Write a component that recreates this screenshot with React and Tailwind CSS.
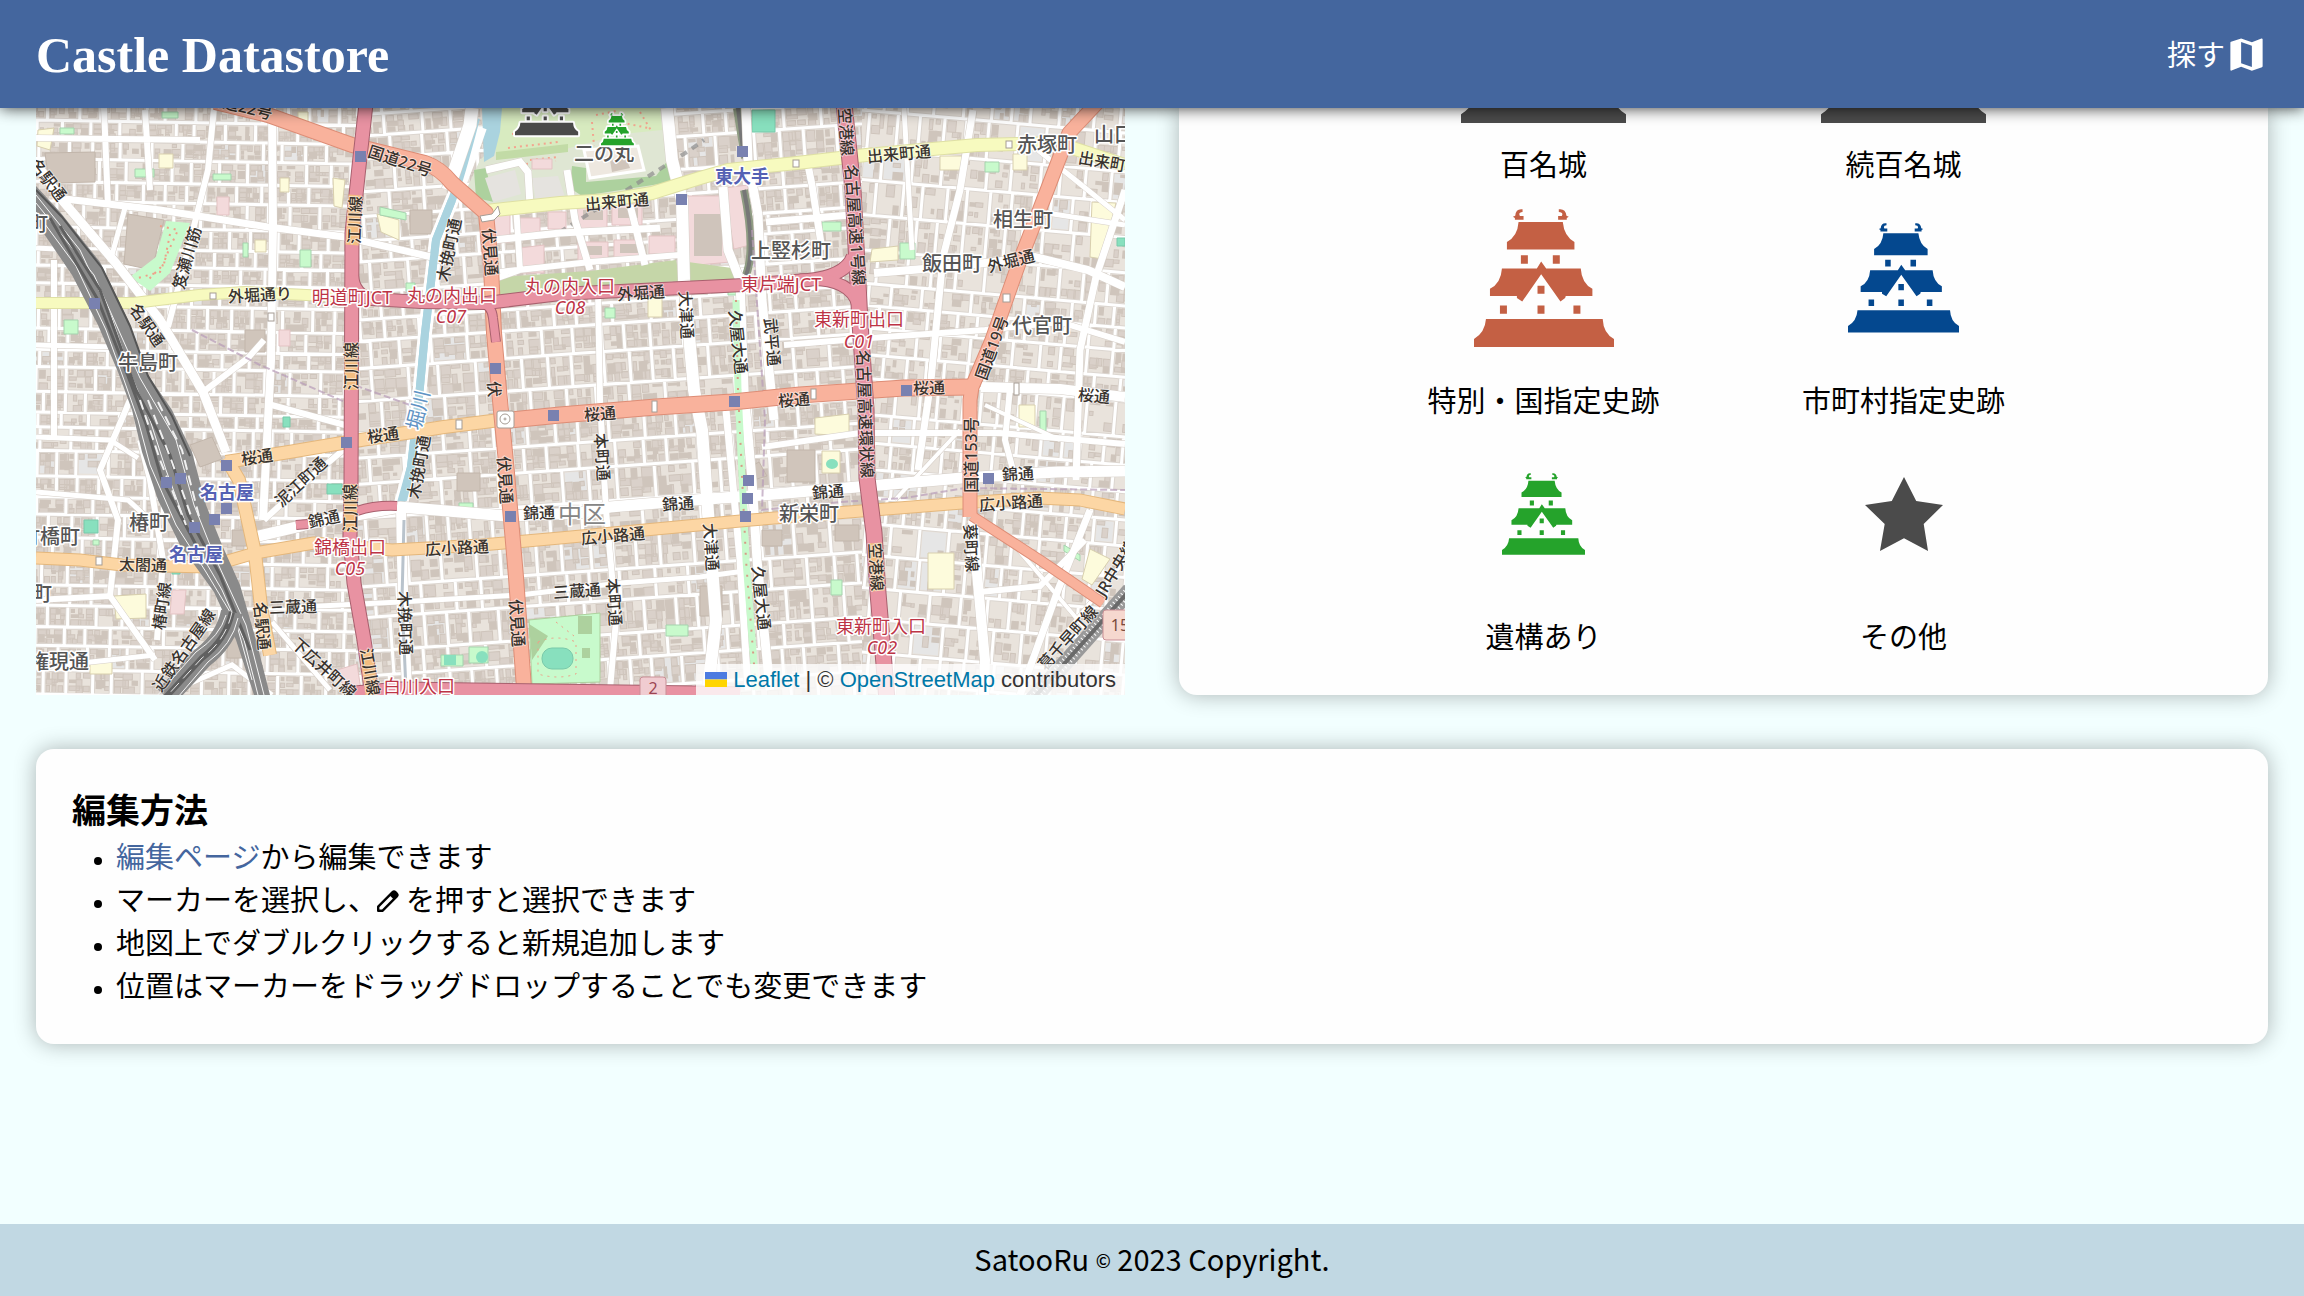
import React from 'react';
import { MdMap } from 'react-icons/md';

function CastleShape() {
  return (
    <>
      <path d="M255 657H606Q608 700 640 717V741H219V717Q252 698 255 657Z" />
      <path d="M303 505H408L421 484L436 505H540Q543 550 575 566V588H495L493 594L479 604L421 522L364 604L348 594V588H267V566Q300 550 303 505Z" />
      <path d="M353 365H486Q490 408 521 425V448H318V425Q350 408 353 365Z" />
      <path d="M360 465h21v26h-21zM456 465h21v26h-21zM410 557h21v24h-21zM297 616h21v25h-21zM410 616h21v25h-21zM518 616h21v25h-21z" />
      <path d="M365 327Q345 324 343 346L336 349L342 353V358H368V347H357Q351 336 365 335Z" />
      <path d="M474 327Q494 324 497 346L504 349L498 353V358H472V347H483Q489 336 474 335Z" />
    </>
  );
}

function Castle({ className }) {
  return (
    <svg viewBox="219 326 421 415" className={className} fill="currentColor" aria-hidden="true">
      <CastleShape />
    </svg>
  );
}

function Star() {
  return (
    <svg viewBox="0 0 198 222" className="h-[74px] w-[78px] text-[#4b4b4b]" preserveAspectRatio="none" fill="currentColor" aria-hidden="true">
      <path d="M99 0L130 72L198 84L149 141L160 222L99 184L38 222L50 141L0 84L68 72Z" />
    </svg>
  );
}

function Pencil() {
  return (
    <svg viewBox="0 0 22 22" className="mr-[7px] inline size-[22px] align-[-1px]" aria-hidden="true">
      <path d="M1.2 20.8V16.6L15.6 2.2a2 2 0 0 1 2.8 0L19.8 3.6a2 2 0 0 1 0 2.8L5.4 20.8Z" fill="none" stroke="currentColor" strokeWidth="2.4" strokeLinejoin="round" />
      <path d="M12.6 5.2L15.6 2.2a2 2 0 0 1 2.8 0L19.8 3.6a2 2 0 0 1 0 2.8L16.8 9.4Z" fill="currentColor" />
    </svg>
  );
}

/* ---------- map drawing ---------- */

function makeRandom(seed) {
  let s = seed;
  return () => {
    s = (s * 16807) % 2147483647;
    return s / 2147483647;
  };
}

function district(seed, x0, x1, angle, cellW, cellH, density) {
  const rnd = makeRandom(seed);
  let houses = '';
  let dark = '';
  let lots = '';
  let streets = '';
  const a = x0 - 80;
  const b = x1 + 80;
  for (let y = 20; y < 780; ) {
    const h = cellH * (0.7 + rnd() * 0.6);
    streets += `M${a} ${y.toFixed(1)}H${b}`;
    for (let x = a + rnd() * 8; x < b; ) {
      const w = cellW * (0.7 + rnd() * 0.6);
      streets += `M${x.toFixed(1)} ${y.toFixed(1)}v${h.toFixed(1)}`;
      for (let i = 0; i < 9; i++) {
        if (rnd() > density) continue;
        const bw = 3 + rnd() * w * 0.28;
        const bh = 3 + rnd() * h * 0.28;
        const bx = x + 3 + (i % 3) * ((w - 5) / 3);
        const by = y + 3 + Math.floor(i / 3) * ((h - 5) / 3);
        const r = `M${bx.toFixed(1)} ${by.toFixed(1)}h${bw.toFixed(1)}v${bh.toFixed(1)}h${(-bw).toFixed(1)}z`;
        if (rnd() > 0.7) dark += r;
        else houses += r;
      }
      if (rnd() > 0.9) lots += `M${(x + 3).toFixed(1)} ${(y + 3).toFixed(1)}h${(w - 6).toFixed(1)}v${(h - 6).toFixed(1)}h${(6 - w).toFixed(1)}z`;
      x += w;
    }
    y += h;
  }
  return { houses, dark, lots, streets, transform: `rotate(${angle} ${(x0 + x1) / 2} 400)` };
}

const districts = [
  { id: 'west', x0: 36, x1: 356, ...district(11, 36, 356, 1, 25, 20, 0.78) },
  { id: 'mid', x0: 356, x1: 862, ...district(77, 356, 862, -4, 30, 29, 0.92) },
  { id: 'east', x0: 862, x1: 1125, ...district(5, 862, 1125, 5, 24, 30, 0.5) },
];

const greens = [
  'M60 128h14v6h-14z M162 112h16v6h-16z M135 169h19v8h-19z M213 174h18v6h-18z M300 250h11v17h-11z M64 320h14v14h-14z M380 207l26 6v7l-26-5z M406 283h9v8h-9z M243 243h5v14h-5z',
  'M822 222h19v9h-19z M985 162h14v10h-14z M900 243h15v16h-15z M728 275h12v20h-12z M605 308h10v10h-10z M831 580h11v15h-11z M666 625h22v11h-22z M1040 411h6v20h-6z M1064 545l16 10v6l-16-10z M441 655h22v11h-22z M469 647h19v16h-19z M93 540h6v5h-6z M459 503h14v8h-14z',
];
const teals = 'M84 520h14v13h-14z M327 484h15v10h-15z M283 417h7v10h-7z M752 110h23v22h-23z M1117 238h8v8h-8z M172 570h8v4h-8z';
const sands = 'M38 130l16-2l-4 22l-13-4z M159 154h14v14h-14z M333 178l12 2l-3 28l-8-2z M377 214l22 6v20l-18-8z M114 596l32 -2v24l-30 1z M90 662h22v12h-22z M940 156h22v14h-22z M1013 154h14v16h-14z M872 249l26-3v14l-28 2z M1092 202l24 1l-14 56l-12-2z M815 418l34-4v22l-34-2z M822 451h18v22h-18z M928 553h26v36h-26z M1019 405h16v22h-16z M1090 549l20 10l-18 26l-10-6z M280 178h9v14h-9z M298 112h10v12h-10z M648 295h14v22h-14z M255 240h11v12h-11z';
const grays = 'M45 153l50 -1v30l-46 1z M128 214l36 6l-12 50l-28-6z M245 330h20v22h-20z M787 450h28v32h-28z M745 470l14-8l8 14l-20 6z M835 525h24v16h-24z M762 530h20v16h-20z M457 473h23v18h-23z M692 215h34v44h-34z M190 445l22-8l10 22l-22 8z M700 586h22v30h-22z M232 530h20v16h-20z M227 630h17v28h-17z M410 210h22v24h-22z M1064 665h20v14h-20z';
const pinks = [
  'M486 212l24-2v32l-22 2z', 'M516 218h24v20l-24 3z', 'M548 212h18v17h-18z', 'M575 205h32v24h-30z', 'M612 203h30v22h-30z', 'M686 196h38l6 66l-42 4z', 'M724 188l24-3l2 60l-16 4z', 'M578 242h30v20h-30z', 'M614 240h28v18h-28z', 'M649 236h26v18h-26z', 'M520 248l24-3v28h-24z', 'M217 197h12v18h-12z', 'M172 590h14l-2 24h-14z', 'M279 330h11v16h-11z', 'M337 670l20-6l4 26h-16z', 'M532 159h20v10h-20z',
];

const whiteRoads = [
  [7, 'M65 199L160 210L268 227L345 237L432 257L445 262'],
  [8, 'M272 108L273 227L271 360L263 520'],
  [6, 'M214 108L208 170L188 250L168 327'],
  [9, 'M36 163L62 200L115 262L160 320L203 392L226 452'],
  [5, 'M125 208L110 262 M36 248L75 250 M36 345L116 347 M36 437L110 440L138 458'],
  [6, 'M104 108L108 206 M36 138L200 140 M145 110L150 190 M54 260V440'],
  [12, 'M667 108L672 160L682 200L684 280L694 390L702 430L710 540L716 620L708 690'],
  [9, 'M746 108L748 160L758 215L762 300L774 420'],
  [9, 'M723 187L728 250L740 280L744 390L752 480L757 560L770 690'],
  [7, 'M726 410L740 560L748 690'],
  [10, 'M401 507L402 560L404 620L407 690'],
  [11, 'M255 537L318 522L400 507L507 516L580 513L610 507L694 500L763 495L962 478L1057 472L1125 471'],
  [6, 'M264 520L310 478L348 446'],
  [5, 'M300 607L400 602L520 595L620 583L700 577L752 570'],
  [10, 'M981 387L1060 389L1125 397'],
  [8, 'M874 273L960 266L1035 257L1088 270L1125 287'],
  [7, 'M973 110L960 190L943 257L931 380L918 470'],
  [7, 'M1125 190L1096 277L1080 350L1076 480'],
  [6, 'M784 345L870 338L985 330L1060 322L1125 342'],
  [10, 'M973 520L977 573L985 660L984 695'],
  [6, 'M762 447L860 433L1000 433L1125 444'],
  [6, 'M1010 388L1005 440L1013 470'],
  [7, 'M1090 510L1058 590L1020 695'],
  [6, 'M980 592L1040 586L1085 540'],
  [7, 'M766 222L850 215 M808 165L812 185L822 250'],
  [7, 'M493 240L560 233L660 228 M486 170L520 162L528 172L530 205 M567 170L575 220L590 270 M630 205L645 265'],
  [6, 'M516 205L520 270L492 280 M500 272L590 262L680 255'],
  [6, 'M598 290L600 400L606 510L616 620L610 690'],
  [5, 'M272 695L232 665L175 690 M272 622L330 690'],
  [6, 'M157 640L163 560L150 480L140 440'],
  [6, 'M36 600L110 596L155 660 M110 596L118 520L100 470L130 400'],
  [5, 'M36 668L155 655 M36 492L128 500L150 520'],
  [6, 'M203 392L248 358L264 340 M268 404L345 425'],
  [5, 'M904 108L912 250 M1125 225L1040 212 M1038 150L1125 220'],
  [4, 'M960 430L895 500 M985 405L1060 440 M1010 540L1095 640 M1125 560L1060 640'],
  [13, 'M472 108L470 125L448 190'],
];

const motorways = [
  [13, 'M366 104L360 157L352 233L351 483L350 537L354 583L364 640L372 695'],
  [12, 'M352 276Q354 296 372 299L421 302L486 303L560 294L600 292L744 285L808 280Q846 276 853 256'],
  [11, 'M800 280Q850 276 858 305'],
  [8, 'M482 303Q492 306 493 318L496 342'],
  [15, 'M844 104L853 190L858 283L860 323L866 410L867 478L874 533L878 593L887 700'],
  [8, 'M357 511Q375 505 397 506'],
  [8, 'M296 525L308 524'],
  [17, 'M355 695L400 691L698 695L740 696'],
];
const salmonRoads = [
  [14, 'M215 102L268 115L352 145L425 163Q440 168 452 183L486 213L491 267L494 333L499 390L507 473L516 577L524 688'],
  [15, 'M500 421L560 415L656 407L732 402L800 395L904 388L971 387'],
  [13, 'M1098 102L1069 133L1046 193L1019 263L992 340L972 387L970 400L970 517'],
  [9, 'M972 516L1040 560L1103 603'],
];
const orangeRoads = [
  [12, 'M226 462L289 452L348 442L444 427L500 420'],
  [12, 'M226 458L239 480L255 553L261 607L270 655'],
  [11, 'M36 558L80 560L122 565L207 567L255 553L314 543L392 550L481 545L560 538L751 520L836 513L962 503L1038 498L1080 500L1125 509'],
];
const yellowRoads = [
  [10, 'M36 303H134L199 295L245 292L348 297'],
  [12, 'M486 211L560 203L610 200L652 193L700 178L728 170L797 163L866 155L977 145L1057 143L1125 165'],
];

const stations = [
  [360, 156], [94, 303], [495, 368], [742, 151], [681, 199], [734, 401], [906, 390], [553, 415], [346, 442], [226, 465],
  [166, 482], [180, 478], [226, 508], [214, 519], [194, 527], [510, 516], [748, 480], [747, 498], [745, 516], [988, 478],
];

const placeLabels = [
  ['上竪杉町', 791, 251], ['飯田町', 952, 264], ['相生町', 1023, 220], ['代官町', 1042, 326], ['赤塚町', 1047, 145],
  ['山口町', 1124, 135], ['二の丸', 604, 154], ['牛島町', 148, 363], ['椿町', 149, 523], ['竹橋町', 50, 537],
  ['町', 42, 594], ['町', 38, 224], ['権現通', 59, 662], ['新栄町', 809, 514],
];
const stationLabels = [['東大手', 742, 177], ['名古屋', 227, 493], ['名古屋', 196, 555]];
const junctionLabels = [
  ['明道町JCT', 352, 298], ['丸の内出口', 452, 296], ['丸の内入口', 570, 287], ['東片端JCT', 781, 285], ['東新町出口', 859, 320],
  ['錦橋出口', 350, 548], ['東新町入口', 881, 627], ['白川入口', 419, 687],
];
const exitCodes = [['C07', 451, 317], ['C08', 570, 308], ['C01', 859, 342], ['C05', 350, 569], ['C02', 882, 648]];
const roadLabels = [
  ['国道22号', 400, 161, 18], ['国道22号', 240, 106, 14], ['出来町通', 617, 202, -5], ['出来町通', 899, 154, -5], ['出来町通', 1110, 163, 10],
  ['外堀通り', 260, 295, -3], ['外堀通', 641, 293, -4], ['外堀通', 1011, 261, -14],
  ['桜通', 600, 414, -5], ['桜通', 794, 400, -5], ['桜通', 929, 388, -2], ['桜通', 1094, 396, 5], ['桜通', 257, 457, -8], ['桜通', 383, 435, -8],
  ['泥江町通', 301, 482, -43], ['錦通', 324, 519, -12], ['錦通', 539, 513, -2], ['錦通', 678, 504, -4], ['錦通', 828, 492, -5], ['錦通', 1018, 474, -3],
  ['広小路通', 457, 548, -3], ['広小路通', 613, 536, -5], ['広小路通', 1011, 503, -4], ['太閤通', 143, 565, 2],
  ['三蔵通', 293, 607, -2], ['三蔵通', 577, 591, -4], ['江川線', 355, 220, -88], ['江川線', 351, 366, -90], ['江川線', 350, 508, -90], ['江川線', 370, 672, 80],
  ['伏見通', 490, 252, 86], ['伏', 494, 389, 86], ['伏見通', 505, 480, 86], ['伏見通', 517, 623, 86],
  ['木挽町通', 449, 250, -78], ['木挽町通', 419, 467, -80], ['木挽町通', 405, 623, 88],
  ['大津通', 686, 315, 87], ['大津通', 711, 547, 86], ['久屋大通', 738, 342, 84], ['久屋大通', 761, 598, 84], ['武平通', 772, 342, 85],
  ['本町通', 602, 457, 86], ['本町通', 614, 602, 86], ['名古屋高速1号線', 855, 225, 86], ['空港線', 846, 132, 86], ['名古屋高速環状線', 865, 414, 88], ['空港線', 876, 567, 87],
  ['国道19号', 992, 348, -70], ['国道153号', 971, 455, -90], ['葵町線', 971, 548, 87], ['笈瀬川筋', 187, 258, -74],
  ['名駅通', 48, 180, 52], ['名駅通', 147, 325, 55], ['名駅通', 262, 626, 84], ['椿町線', 162, 606, -82], ['近鉄名古屋線', 184, 650, -55],
  ['下広井町線', 324, 668, 42], ['葛千早町線', 1068, 638, -48], ['JR中央線', 1116, 568, -58],
];

function Roads({ roads, fill, casing }) {
  return (
    <g fill="none" strokeLinejoin="round">
      {roads.map(([w, d]) => <path key={`c${d}`} d={d} stroke={casing} strokeWidth={w + 2} />)}
      {roads.map(([w, d]) => <path key={`f${d}`} d={d} stroke={fill} strokeWidth={w} />)}
    </g>
  );
}

function Labels({ items, size, fill, weight, italic, halo = '#ffffff', haloWidth = 3 }) {
  return (
    <g fontSize={size} fill={fill} fontWeight={weight} fontStyle={italic ? 'italic' : 'normal'} stroke={halo} strokeWidth={haloWidth} strokeLinejoin="round" paintOrder="stroke" textAnchor="middle">
      {items.map(([text, x, y, r = 0]) => (
        <text key={`${text}${x}-${y}`} x={x} y={y} dy="0.36em" transform={`rotate(${r} ${x} ${y})`}>{text}</text>
      ))}
    </g>
  );
}

function CityMap() {
  return (
    <svg viewBox="36 108 1089 587" preserveAspectRatio="xMidYMid slice" className="block h-full w-full font-['Noto_Sans','Noto_Sans_CJK_JP',sans-serif]" role="img" aria-label="地図">
      <defs>
        {districts.map((d) => (
          <clipPath key={d.id} id={`clip-${d.id}`}><rect x={d.x0} y="100" width={d.x1 - d.x0} height="600" /></clipPath>
        ))}
      </defs>
      <rect x="36" y="100" width="1089" height="600" fill="#e9e3dc" />
      {districts.map((d) => (
        <g key={d.id} clipPath={`url(#clip-${d.id})`}>
          <g transform={d.transform}>
            <path d={d.lots} fill="#e6e6e6" />
            <path d={d.houses} fill="#dad1ca" stroke="#cfc5bc" strokeWidth="1" />
            <path d={d.dark} fill="#cfc5bc" />
            <path d={d.streets} stroke="#dcd6d0" strokeWidth="5" fill="none" />
            <path d={d.streets} stroke="#ffffff" strokeWidth="3" fill="none" />
          </g>
        </g>
      ))}
      <path d={grays} fill="#d0c5bb" stroke="#c2b6ab" />
      <path d={sands} fill="#fdfbdc" stroke="#d8cfae" />
      {greens.map((d) => <path key={d} d={d} fill="#c8facc" stroke="#a5d3ae" />)}
      <path d={teals} fill="#88e0be" stroke="#79c9aa" />
      <path d="M166 221l24 2l-20 50l-20 18l-20-14l26-20z" fill="#c8facc" />
      <path d="M160 226l18 4l-10 22l-8 20l-22 6M170 234l-6 30l-16 16" stroke="#ef9f88" strokeWidth="2" strokeDasharray="2 5" fill="none" />

      <path d="M482 108H664L672 162L668 186L560 203L490 208L468 186L480 160L490 150Z" fill="#dfe6d3" />
      <path d="M494 108h166l2 22l-40 4l-60 16l-66 10z" fill="#d8ebc0" />
      <path d="M482 108h20l-2 24l-6 24l-10 6z" fill="#aad3df" />
      <path d="M474 170l12-2l8 34l-18-4zM572 166l14 2v14l70-6l12-16l4 22l-90 14l-12-8z" fill="#add19e" />
      <path d="M496 152l72-8v8l-72 8z" fill="#c2dba6" />
      <path d="M584 150l54-4l6 24l-54 8z" fill="#eee8e0" stroke="#ffffff" strokeWidth="3" />
      <path d="M610 160l16-2l4 10l-18 4z" fill="#d0c5bb" />
      <path d="M485 178l30-8l6 24l-28 8zM532 178l26-2l8 24l-30 2z" fill="#e5e3df" />
      <path d="M508 148l50-6M512 134l40-4M610 120l38 8M596 115l20-4M526 164l30-3M530 160l28-3M592 122l2 24M640 112l12 20" stroke="#f3a58f" strokeWidth="2" strokeDasharray="2 4" fill="none" />
      {pinks.map((d) => <path key={d} d={d} fill="#f3dadb" stroke="#e3c3c3" />)}
      <path d="M694 214h28v42h-28zM583 210h20v10h-20zM618 208h20v10h-20zM584 246h18v9h-18zM620 244h18v9h-18z" fill="#cfc4bb" />
      <path d="M499 277L590 271L676 260L680 281L590 287L500 296ZM688 262L732 268L738 281L690 283Z" fill="#c5d6a8" />
      <path d="M737 108l8 50M744 190Q756 250 746 275" stroke="#8f9c83" strokeWidth="8" fill="none" />
      <path d="M738 108l6 50M744 190Q756 250 746 275" stroke="#777777" strokeWidth="4" fill="none" />
      <path d="M560 232L690 150L704 140" stroke="#8b8b8b" strokeWidth="4" strokeDasharray="7 6" fill="none" opacity=".7" />
      <path d="M480 127Q462 180 452 200L436 240L425 333L419 397L411 467L401 503" stroke="#ffffff" strokeWidth="14" fill="none" />
      <path d="M476 118Q460 180 452 200L436 240L425 333L419 397L411 467L401 503" stroke="#aad3df" strokeWidth="8" fill="none" />

      <g fill="none">
        {whiteRoads.map(([w, d]) => <path key={`c${d}`} d={d} stroke="#d6cfc8" strokeWidth={w + 1} />)}
        {whiteRoads.map(([w, d]) => <path key={d} d={d} stroke="#ffffff" strokeWidth={w} />)}
      </g>
      <path d="M452 200L436 240L425 333L419 397L411 467L403 500" stroke="#aad3df" strokeWidth="8" fill="none" />
      <path d="M404 520L402 600L406 690" stroke="#b9c3cc" strokeWidth="3" fill="none" />
      <path d="M736 300L738 390L746 560L756 690" stroke="#c8facc" strokeWidth="7" fill="none" />
      <path d="M736 300L738 390L746 560L756 690" stroke="#d79a86" strokeWidth="2" strokeDasharray="2 9" fill="none" />

      <path d="M529 620L600 613V682L532 684Z" fill="#c8facc" stroke="#add19e" />
      <path d="M529 624L548 636L532 660Z M578 616h14v18h-14z M582 648h8v10h-8z" fill="#add19e" />
      <rect x="542" y="648" width="31" height="21" rx="10" fill="#88e0be" stroke="#79c9aa" />
      <path d="M538 642q18-8 38 0v32q-18 6-38 0z M556 622l18 14" stroke="#ef9f88" strokeWidth="1" strokeDasharray="2 5" fill="none" />
      <circle cx="482" cy="657" r="6" fill="#88e0be" /><rect x="444" y="655" width="12" height="10" fill="#88e0be" />
      <ellipse cx="832" cy="464" rx="6" ry="5" fill="#88e0be" />
      <path d="M192 330L260 365L345 402L354 385L410 405 M752 230L765 420L762 510L840 502L905 498L965 488L1125 490" stroke="#b79bb8" strokeWidth="2" strokeDasharray="7 3" fill="none" opacity=".7" />

      <Roads roads={yellowRoads} fill="#f7fabf" casing="#dfe0a4" />
      <Roads roads={orangeRoads} fill="#fcd6a4" casing="#e4b77c" />

      <path d="M36 186L60 212L100 262L128 320L146 372L172 410L192 452L206 505L222 545L240 585L256 640L270 695H254L236 640L214 592L180 545L158 500L142 452L132 410L118 372L98 325L72 275L36 222Z" fill="#8a8a8a" />
      <g fill="none">
        <path d="M36 195L80 250L112 318L130 372L150 420L166 470L190 535L222 590L244 640L258 695M36 212L76 266L106 330L124 380L138 420L150 465L176 525L206 572L236 622L252 680M36 203L94 275L140 378L176 440L194 505L214 555L246 625L264 695" stroke="#f4f4f4" strokeWidth="1" />
        <path d="M60 226L100 290L136 390L170 455L188 515L220 575L250 650M50 218L98 300L128 376L146 424L162 480L196 545" stroke="#5f5f5f" strokeWidth="3" />
        <path d="M140 400L160 460L186 525M158 402L182 450L200 520M148 400L172 462L196 530" stroke="#f0f0f0" strokeWidth="2" strokeDasharray="10 6" />
        <path d="M36 190L62 217L102 268L130 326L148 376L172 416L190 456" stroke="#555555" strokeWidth="2" />
        <path d="M232 612Q226 640 202 658L166 697" stroke="#8a8a8a" strokeWidth="22" />
        <path d="M226 615Q220 636 196 652L156 697M238 618Q232 645 208 662L178 697" stroke="#f4f4f4" strokeWidth="1" />
        <path d="M232 612Q226 640 202 658L166 697" stroke="#606060" strokeWidth="6" />
        <path d="M232 612Q226 640 202 658L166 697" stroke="#e8e8e8" strokeWidth="1" strokeDasharray="12 6" />
        <path d="M1130 590L1032 700" stroke="#9a9a9a" strokeWidth="16" />
        <path d="M1130 590L1032 700" stroke="#ffffff" strokeWidth="10" strokeDasharray="1 3" />
        <path d="M1130 590L1032 700" stroke="#6a6a6a" strokeWidth="4" />
      </g>

      <Roads roads={salmonRoads} fill="#f9b29c" casing="#dd8d76" />
      <Roads roads={motorways} fill="#e892a2" casing="#a8606e" />
      <g fill="none" stroke="#f3bd80" strokeWidth="13">
        <path d="M355 195L352 245M351 343V390M351 484L350 532M366 650L372 695M875 543L878 591" />
      </g>

      <g fill="#ffffff" stroke="#a59c94">
        <rect x="497" y="411" width="17" height="17" rx="2" /><circle cx="505" cy="419" r="5" /><circle cx="505" cy="419" r="1" />
        <rect x="652" y="401" width="5" height="11" /><rect x="811" y="389" width="5" height="10" /><rect x="1003" y="294" width="7" height="8" /><rect x="1014" y="383" width="5" height="12" />
        <rect x="793" y="160" width="6" height="7" /><rect x="1006" y="141" width="6" height="7" /><rect x="456" y="420" width="6" height="9" /><rect x="96" y="557" width="6" height="8" /><rect x="268" y="313" width="6" height="8" /><rect x="210" y="293" width="6" height="6" />
        <path d="M480 216l12-2l6-8l2 8l-6 6l-12 2z" />
      </g>

      <g fill="#7981b0">
        {stations.map(([x, y]) => <rect key={`${x}-${y}`} x={x - 5} y={y - 5} width="11" height="11" />)}
      </g>

      <Labels items={roadLabels} size={16} fill="#38332e" weight="500" halo="#ffffff88" haloWidth={2} />
      <Labels items={[['堀川', 418, 410, -76]]} size={20} fill="#5f93c4" />
      <Labels items={placeLabels} size={20} fill="#555555" weight="500" />
      <Labels items={[['中区', 582, 514]]} size={24} fill="#858585" />
      <Labels items={stationLabels} size={18} fill="#5461b4" weight="700" />
      <Labels items={junctionLabels} size={18} fill="#bd3446" />
      <Labels items={exitCodes} size={18} fill="#bd3446" italic />

      <g stroke="#c98f96" fontSize="16" textAnchor="middle">
        <rect x="640" y="677" width="26" height="26" rx="3" fill="#f0ccd1" />
        <text x="653" y="694" stroke="none" fill="#9c4452">2</text>
        <rect x="1103" y="610" width="40" height="30" rx="3" fill="#f6d8cf" />
        <text x="1120" y="631" stroke="none" fill="#7b4a3c">15</text>
      </g>

      <g strokeLinejoin="round" stroke="#ffffff">
        <g transform="translate(515 73) scale(.15) translate(-219 -326)" fill="#4b4b4b" strokeWidth="26"><CastleShape /></g>
        <g transform="translate(601 113) scale(.078) translate(-219 -326)" fill="#25a32b" strokeWidth="46"><CastleShape /></g>
        <g transform="translate(515 73) scale(.15) translate(-219 -326)" fill="#4b4b4b" strokeWidth="0"><CastleShape /></g>
        <g transform="translate(601 113) scale(.078) translate(-219 -326)" fill="#25a32b" strokeWidth="0"><CastleShape /></g>
      </g>
    </svg>
  );
}

/* ---------- page ---------- */

const legend = [
  { label: '百名城', icon: <Castle className="w-[165px] text-[#4b4b4b]" /> },
  { label: '続百名城', icon: <Castle className="w-[165px] text-[#4b4b4b]" /> },
  { label: '特別・国指定史跡', icon: <Castle className="w-[140px] text-[#c46044]" /> },
  { label: '市町村指定史跡', icon: <Castle className="w-[111px] text-[#04488f]" /> },
  { label: '遺構あり', icon: <Castle className="w-[83px] text-[#25a32b]" /> },
  { label: 'その他', icon: <Star /> },
];

export default function App() {
  return (
    <div className="flex min-h-screen flex-col bg-[#f2ffff] font-['Noto_Sans_CJK_JP',sans-serif] text-[29px] leading-[43px] text-black">
      <header className="sticky top-0 z-10 flex h-[108px] items-center justify-between bg-[#44669e] px-9 text-white shadow-[0_0_15px_rgba(0,0,0,0.8)]">
        <a href="#top" className="pt-0.5 font-['Liberation_Serif',serif] text-[50px] font-bold">Castle Datastore</a>
        <a href="#search" className="flex items-center">
          <span className="pb-0.5">探す</span>
          <MdMap className="size-[43px]" />
        </a>
      </header>

      <main className="flex flex-1 flex-col gap-[54px] px-9">
        <div className="grid h-[587px] grid-cols-2 gap-[54px]">
          <section className="relative min-h-0 overflow-hidden">
            <CityMap />
            <div className="absolute right-0 bottom-0 flex items-center bg-white/80 px-[9px] font-['Liberation_Sans',sans-serif] text-[22px] leading-[31px] text-[#333]">
              <svg viewBox="0 0 12 8" className="mr-1.5 h-[15px] w-[22px]" preserveAspectRatio="none" aria-hidden="true">
                <path fill="#4c7be1" d="M0 0h12v4H0z" />
                <path fill="#ffd500" d="M0 4h12v4H0z" />
              </svg>
              <p>
                <a href="#leaflet" className="text-[#0078a8]">Leaflet</a> | © <a href="#osm" className="text-[#0078a8]">OpenStreetMap</a> contributors
              </p>
            </div>
          </section>

          <section className="min-h-0 rounded-b-[18px] bg-[#fefefe] shadow-[0_0_22px_rgba(0,0,0,0.3)]">
            <div className="flex h-full flex-col items-center justify-end overflow-hidden pb-[35px]">
              <ul className="grid grid-cols-[360px_360px]">
                {legend.map(({ label, icon }) => (
                  <li key={label} className="flex flex-col items-center pb-[3px]">
                    <div className="mb-2.5 flex h-[180px] items-center">{icon}</div>
                    <span>{label}</span>
                  </li>
                ))}
              </ul>
            </div>
          </section>
        </div>

        <section className="rounded-[18px] bg-[#fefefe] px-9 pt-[34px] pb-[38px] shadow-[0_0_22px_rgba(0,0,0,0.3)]">
          <h2 className="text-[34px] leading-[51px] font-bold">編集方法</h2>
          <ul className="list-disc pl-11 marker:text-[20px]">
            <li><a href="#edit" className="text-[#44669e]">編集ページ</a>から編集できます</li>
            <li>マーカーを選択し、<Pencil />を押すと選択できます</li>
            <li>地図上でダブルクリックすると新規追加します</li>
            <li>位置はマーカーをドラッグドロップすることでも変更できます</li>
          </ul>
        </section>
      </main>

      <footer className="flex h-[72px] items-center justify-center bg-[#c1d8e3]">
        <p className="pb-0.5">SatooRu <span className="align-[3px] text-[18px] font-medium">©</span> 2023 Copyright.</p>
      </footer>
    </div>
  );
}
